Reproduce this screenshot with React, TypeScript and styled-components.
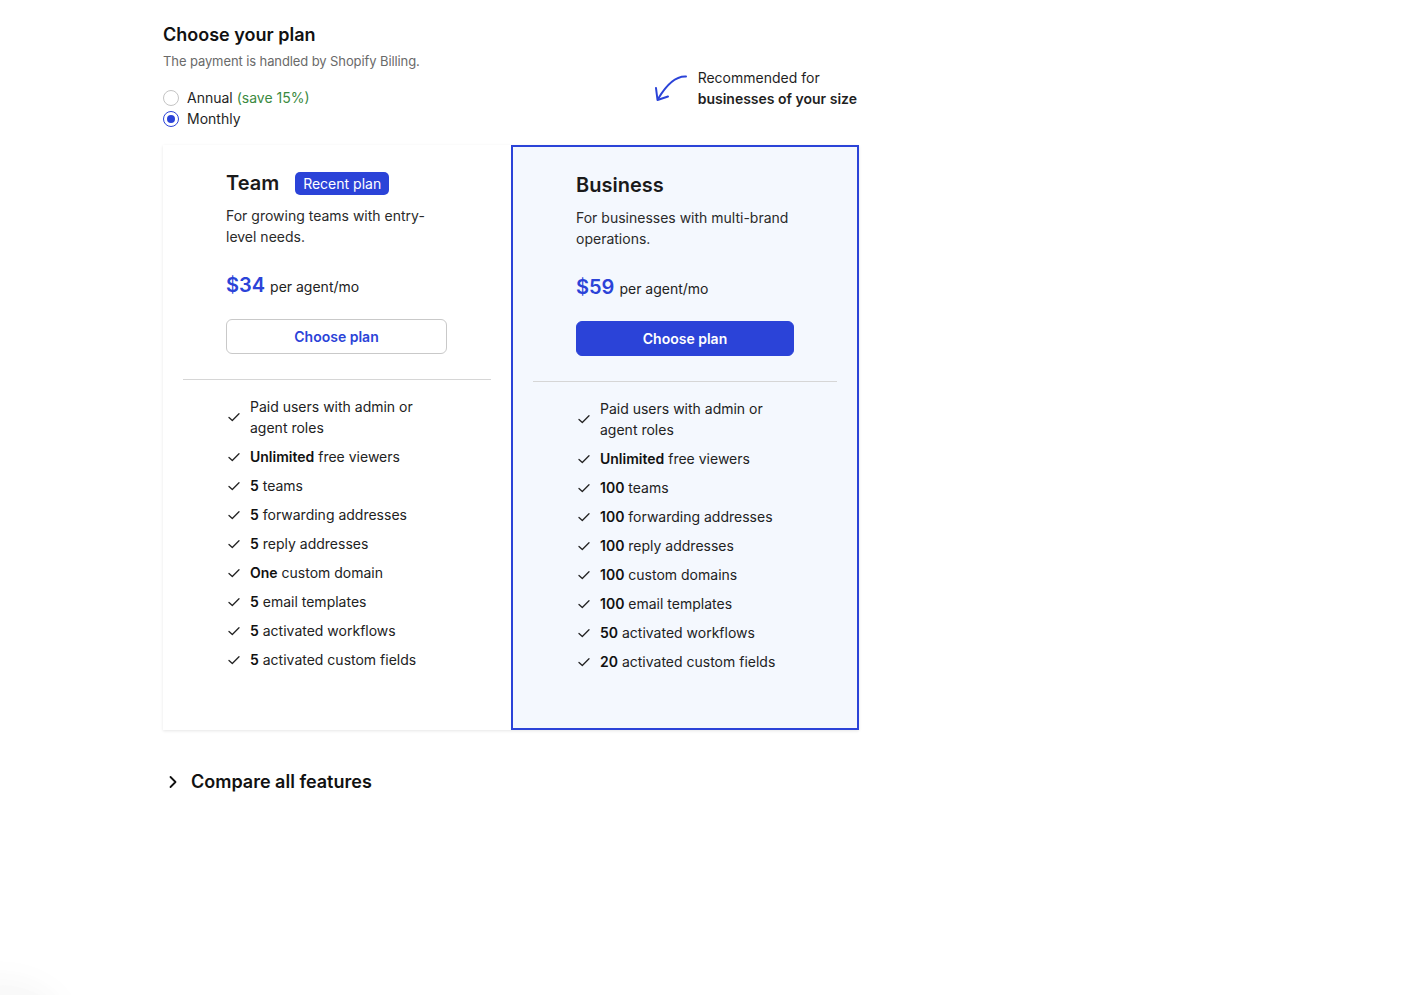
import React from "react";
import styled, { createGlobalStyle } from "styled-components";

const BLUE = "#2b43d8";

const GlobalStyle = createGlobalStyle`
  * { box-sizing: border-box; }
  body {
    margin: 0;
    background: #ffffff;
    font-family: Inter, "Noto Sans", Arial, sans-serif;
    color: #1a1a1a;
    -webkit-font-smoothing: antialiased;
  }
`;

const Page = styled.div`
  padding: 24px 0 0 163px;
  min-height: 995px;
`;

const Wrap = styled.div`
  width: 696px;
`;

const Header = styled.div`
  display: flex;
  justify-content: space-between;
  align-items: flex-start;
`;

const Title = styled.h1`
  margin: 0;
  font-size: 18px;
  line-height: 22px;
  font-weight: 600;
  color: #111;
`;

const Sub = styled.p`
  margin: 6px 0 17px;
  font-size: 13px;
  line-height: 18px;
  letter-spacing: -0.1px;
  color: #6a6a6a;
`;

const RadioRow = styled.label`
  display: flex;
  align-items: center;
  gap: 8px;
  height: 21px;
  font-size: 14px;
  color: #1f1f1f;
`;

const RadioDot = styled.span<{ $on?: boolean }>`
  width: 16px;
  height: 16px;
  border-radius: 50%;
  border: 1px solid ${({ $on }) => ($on ? BLUE : "#c4c4c4")};
  display: flex;
  align-items: center;
  justify-content: center;
  &::after {
    content: "";
    width: 8px;
    height: 8px;
    border-radius: 50%;
    background: ${({ $on }) => ($on ? BLUE : "transparent")};
  }
`;

const Save = styled.span`
  color: #3b8a3f;
`;

const Rec = styled.div`
  margin-top: 43px;
  margin-right: 2px;
  display: flex;
  gap: 9px;
  align-items: flex-start;
`;

const RecText = styled.div`
  font-size: 14px;
  line-height: 21px;
  color: #1f1f1f;
  b { font-weight: 600; }
`;

const Cards = styled.div`
  margin-top: 16px;
  display: flex;
  box-shadow: 0 1px 3px rgba(0, 0, 0, 0.1);
`;

const Card = styled.div<{ $featured?: boolean }>`
  width: 348px;
  height: 585px;
  background: ${({ $featured }) => ($featured ? "#f4f8fe" : "#ffffff")};
  border: ${({ $featured }) => ($featured ? `2px solid ${BLUE}` : "none")};
`;

const Top = styled.div`
  padding: 26px 40px 0 63px;
`;

const NameRow = styled.div`
  display: flex;
  align-items: center;
  gap: 16px;
  height: 24px;
`;

const Name = styled.h2`
  margin: 0;
  font-size: 20px;
  font-weight: 600;
  color: #1a1a1a;
`;

const Badge = styled.span`
  background: ${BLUE};
  color: #fff;
  font-size: 14px;
  line-height: 23px;
  padding: 0 8px;
  border-radius: 5px;
`;

const Desc = styled.p`
  margin: 10px 0 0;
  max-width: 222px;
  font-size: 14px;
  line-height: 21px;
  color: #2a2a2a;
`;

const Price = styled.div`
  margin-top: 26px;
  display: flex;
  align-items: baseline;
  gap: 5px;
  font-size: 14px;
  color: #222;
  strong {
    font-size: 20px;
    font-weight: 600;
    color: ${BLUE};
  }
`;

const Button = styled.button<{ $primary?: boolean; $w: number }>`
  margin-top: 22px;
  width: ${({ $w }) => $w}px;
  height: 35px;
  border-radius: 6px;
  font-family: inherit;
  font-size: 14px;
  font-weight: 600;
  cursor: pointer;
  border: 1px solid ${({ $primary }) => ($primary ? BLUE : "#c9c9c9")};
  background: ${({ $primary }) => ($primary ? BLUE : "#ffffff")};
  color: ${({ $primary }) => ($primary ? "#ffffff" : BLUE)};
`;

const Divider = styled.hr`
  margin: 25px 20px 16px;
  border: none;
  border-top: 1px solid #d6d6d6;
`;

const List = styled.ul`
  margin: 0;
  padding: 0 30px 0 65px;
  list-style: none;
  display: flex;
  flex-direction: column;
  gap: 8px;
`;

const Item = styled.li`
  display: flex;
  align-items: center;
  gap: 10px;
  font-size: 14px;
  line-height: 21px;
  color: #222;
  b { font-weight: 600; color: #111; }
  span { max-width: 180px; }
`;

const Compare = styled.div`
  margin-top: 41px;
  display: flex;
  align-items: center;
  gap: 13px;
  padding-left: 5px;
  font-size: 18px;
  font-weight: 600;
  color: #111;
`;

const CornerShade = styled.div`
  position: fixed;
  left: -60px;
  bottom: -70px;
  width: 120px;
  height: 80px;
  border-radius: 50%;
  box-shadow: 0 0 40px rgba(0, 0, 0, 0.08);
  background: #f6f6f6;
  opacity: 0.6;
`;

const Check = () => (
  <svg width="12" height="12" viewBox="0 0 12 12" fill="none">
    <polyline points="1,6.5 4.3,9.5 11,2.8" stroke="#222" strokeWidth="1.3" strokeLinecap="round" strokeLinejoin="round" />
  </svg>
);

type Feat = [string, string];

const teamFeats: Feat[] = [
  ["", "Paid users with admin or agent roles"],
  ["Unlimited", " free viewers"],
  ["5", " teams"],
  ["5", " forwarding addresses"],
  ["5", " reply addresses"],
  ["One", " custom domain"],
  ["5", " email templates"],
  ["5", " activated workflows"],
  ["5", " activated custom fields"],
];

const bizFeats: Feat[] = [
  ["", "Paid users with admin or agent roles"],
  ["Unlimited", " free viewers"],
  ["100", " teams"],
  ["100", " forwarding addresses"],
  ["100", " reply addresses"],
  ["100", " custom domains"],
  ["100", " email templates"],
  ["50", " activated workflows"],
  ["20", " activated custom fields"],
];

interface PlanProps {
  name: string;
  desc: string;
  price: string;
  feats: Feat[];
  featured?: boolean;
  recent?: boolean;
}

const Plan: React.FC<PlanProps> = ({ name, desc, price, feats, featured, recent }) => (
  <Card $featured={featured}>
    <Top>
      <NameRow>
        <Name>{name}</Name>
        {recent && <Badge>Recent plan</Badge>}
      </NameRow>
      <Desc>{desc}</Desc>
      <Price>
        <strong>{price}</strong> per agent/mo
      </Price>
      <Button $primary={featured} $w={featured ? 218 : 221}>
        Choose plan
      </Button>
    </Top>
    <Divider />
    <List>
      {feats.map(([b, t]) => (
        <Item key={b + t}>
          <Check />
          <span>
            {b && <b>{b}</b>}
            {t}
          </span>
        </Item>
      ))}
    </List>
  </Card>
);

export default function App() {
  return (
    <>
      <GlobalStyle />
      <Page>
        <Wrap>
          <Header>
            <div>
              <Title>Choose your plan</Title>
              <Sub>The payment is handled by Shopify Billing.</Sub>
              <RadioRow>
                <RadioDot />
                <span>
                  Annual <Save>(save 15%)</Save>
                </span>
              </RadioRow>
              <RadioRow>
                <RadioDot $on />
                <span>Monthly</span>
              </RadioRow>
            </div>
            <Rec>
              <svg width="36" height="30" viewBox="0 0 36 30" fill="none" style={{ marginTop: 7 }}>
                <path d="M33 2.5 C24 2 15 8 5 25" stroke={BLUE} strokeWidth="2" strokeLinecap="round" fill="none" />
                <path d="M3 14 L4.5 26 L15 22.5" stroke={BLUE} strokeWidth="2" strokeLinecap="round" strokeLinejoin="round" fill="none" />
              </svg>
              <RecText>
                Recommended for
                <br />
                <b>businesses of your size</b>
              </RecText>
            </Rec>
          </Header>
          <Cards>
            <Plan
              name="Team"
              recent
              desc="For growing teams with entry-level needs."
              price="$34"
              feats={teamFeats}
            />
            <Plan
              name="Business"
              featured
              desc="For businesses with multi-brand operations."
              price="$59"
              feats={bizFeats}
            />
          </Cards>
          <Compare>
            <svg width="10" height="14" viewBox="0 0 10 14" fill="none">
              <polyline points="2.5,2 7.5,7 2.5,12" stroke="#111" strokeWidth="1.8" strokeLinecap="round" strokeLinejoin="round" />
            </svg>
            Compare all features
          </Compare>
        </Wrap>
      </Page>
      <CornerShade />
    </>
  );
}
